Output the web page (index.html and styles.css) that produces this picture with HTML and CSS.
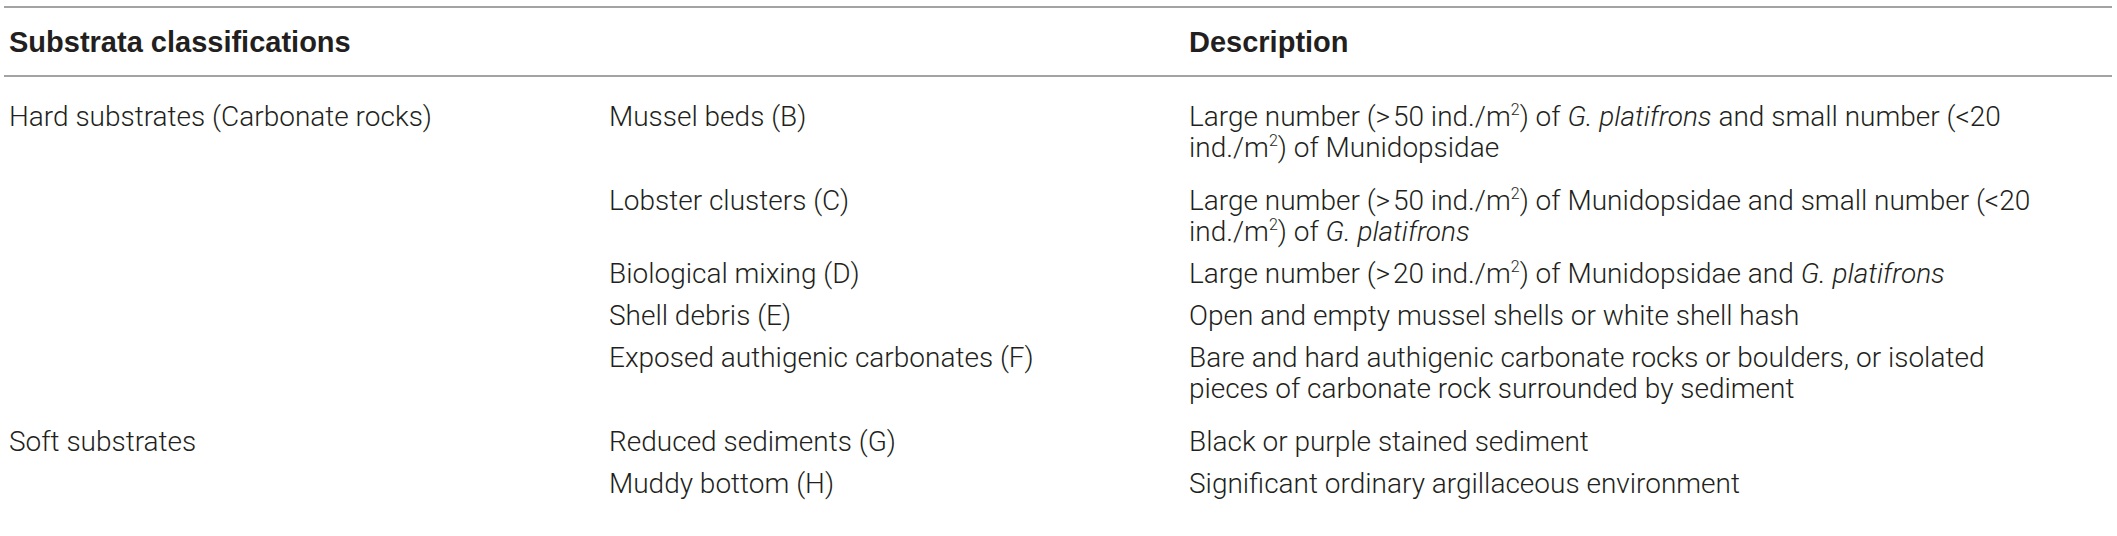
FILE: index.html
```html
<!DOCTYPE html>
<html lang="en">
<head>
<meta charset="utf-8">
<title>Substrata classifications</title>
<link rel="stylesheet" href="styles.css">
</head>
<body>
<table class="tbl">
  <colgroup>
    <col class="c1">
    <col class="c2">
    <col class="c3">
  </colgroup>
  <thead>
    <tr>
      <th colspan="2">Substrata classifications</th>
      <th>Description</th>
    </tr>
  </thead>
  <tbody>
    <tr class="first tall">
      <td>Hard substrates (Carbonate rocks)</td>
      <td>Mussel beds (B)</td>
      <td class="desc">Large number (&gt;&#8202;50 ind./m<sup>2</sup>) of <i>G. platifrons</i> and small number (&lt;20 ind./m<sup>2</sup>) of Munidopsidae</td>
    </tr>
    <tr>
      <td></td>
      <td>Lobster clusters (C)</td>
      <td class="desc">Large number (&gt;&#8202;50 ind./m<sup>2</sup>) of Munidopsidae and small number (&lt;20 ind./m<sup>2</sup>) of <i>G. platifrons</i></td>
    </tr>
    <tr>
      <td></td>
      <td>Biological mixing (D)</td>
      <td class="desc">Large number (&gt;&#8202;20 ind./m<sup>2</sup>) of Munidopsidae and <i>G. platifrons</i></td>
    </tr>
    <tr>
      <td></td>
      <td>Shell debris (E)</td>
      <td class="desc">Open and empty mussel shells or white shell hash</td>
    </tr>
    <tr class="tall">
      <td></td>
      <td>Exposed authigenic carbonates (F)</td>
      <td class="desc">Bare and hard authigenic carbonate rocks or boulders, or isolated pieces of carbonate rock surrounded by sediment</td>
    </tr>
    <tr>
      <td>Soft substrates</td>
      <td>Reduced sediments (G)</td>
      <td class="desc">Black or purple stained sediment</td>
    </tr>
    <tr>
      <td></td>
      <td>Muddy bottom (H)</td>
      <td class="desc">Significant ordinary argillaceous environment</td>
    </tr>
  </tbody>
</table>
</body>
</html>
```

FILE: styles.css
```css
html, body {
  margin: 0;
  padding: 0;
  background: #ffffff;
}

body {
  padding: 6px 5px 0 4px;
  font-family: Roboto, "Liberation Sans", sans-serif;
  font-weight: 300;
  color: #231f20;
}

.tbl {
  width: 100%;
  border-collapse: collapse;
  table-layout: fixed;
  font-size: 28px;
  line-height: 31px;
}

.c1 { width: 600px; }
.c2 { width: 580px; }

.tbl th {
  text-align: left;
  font-family: "Liberation Sans", Arial, sans-serif;
  font-weight: 700;
  font-size: 29px;
  padding: 19px 5px 17px 5px;
  border-top: 2px solid #a3a3a3;
  border-bottom: 2px solid #a3a3a3;
}

.tbl td {
  text-align: left;
  vertical-align: top;
  padding: 5px 5px 6px 5px;
}

.tbl td.desc {
  padding-right: 74px;
}

.tbl tr.first td {
  padding-top: 24px;
}

.tbl tr.tall td {
  padding-bottom: 17px;
}

.tbl sup {
  font-size: 16px;
  line-height: 0;
  vertical-align: 11px;
}

.tbl i {
  font-style: italic;
}
```
